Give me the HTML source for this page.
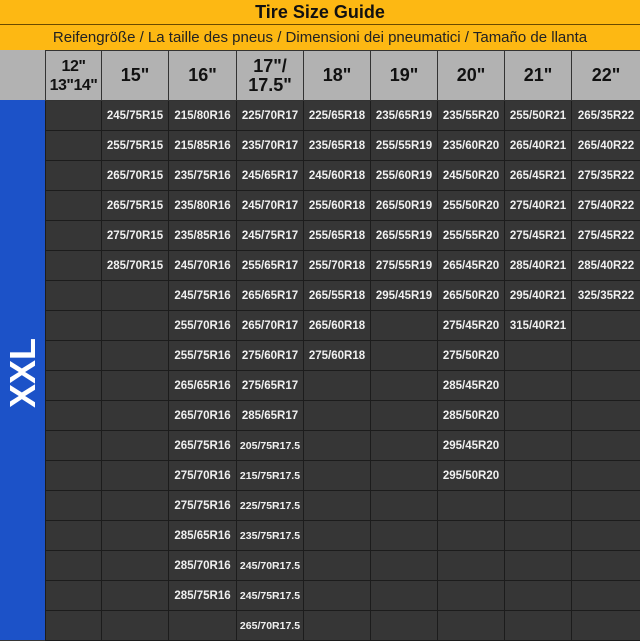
<!DOCTYPE html>
<html><head><meta charset="utf-8"><style>
*{margin:0;padding:0;box-sizing:border-box}
body{width:640px;height:640px;overflow:hidden;background:#363636;font-family:"Liberation Sans",sans-serif;position:relative}
.t1{position:absolute;left:0;top:0;width:640px;height:25px;background:#fdb813;border-bottom:1px solid #6a4a00;text-align:center;font-weight:bold;font-size:18px;line-height:25px;color:#111}
.t2{position:absolute;left:0;top:25px;width:640px;height:25px;background:#fdb813;text-align:center;font-size:15px;line-height:25px;color:#222}
.blue{position:absolute;left:0;top:100px;width:45px;height:540px;background:#1c52c8}
.grayl{position:absolute;left:0;top:50px;width:45px;height:50px;background:#b2b2b2}
.xxl{position:absolute;left:-15px;top:355px;width:76px;height:36px;transform:rotate(-90deg);color:#fff;font-weight:bold;font-size:36px;line-height:36px;text-align:center}
table{position:absolute;left:45px;top:50px;width:595px;border-collapse:collapse;table-layout:fixed}
td{border:1px solid #1c1c1c;height:30px;text-align:center;color:#f0f0f0;font-weight:bold;font-size:11.5px;background:#363636;white-space:nowrap;overflow:hidden;padding:0}
th{border:1px solid #333;height:50px;background:#b2b2b2;color:#111;font-size:18px;line-height:19px;font-weight:bold;overflow:hidden;white-space:nowrap;padding:0}
th.f{font-size:16px;letter-spacing:-0.5px}
.s{font-size:10.5px}
</style></head><body>
<div class="t1">Tire Size Guide</div>
<div class="t2">Reifengröße / La taille des pneus / Dimensioni dei pneumatici / Tamaño de llanta</div>
<div class="grayl"></div>
<div class="blue"></div>
<div class="xxl">XXL</div>
<table>
<colgroup><col style="width:56px"><col style="width:67px"><col style="width:68px"><col style="width:67px"><col style="width:67px"><col style="width:67px"><col style="width:67px"><col style="width:67px"><col style="width:69px"></colgroup>
<tr><th class="f">12"<br>13"14"</th><th>15"</th><th>16"</th><th>17"/<br>17.5"</th><th>18"</th><th>19"</th><th>20"</th><th>21"</th><th>22"</th></tr>
<tr><td></td><td>245/75R15</td><td>215/80R16</td><td>225/70R17</td><td>225/65R18</td><td>235/65R19</td><td>235/55R20</td><td>255/50R21</td><td>265/35R22</td></tr>
<tr><td></td><td>255/75R15</td><td>215/85R16</td><td>235/70R17</td><td>235/65R18</td><td>255/55R19</td><td>235/60R20</td><td>265/40R21</td><td>265/40R22</td></tr>
<tr><td></td><td>265/70R15</td><td>235/75R16</td><td>245/65R17</td><td>245/60R18</td><td>255/60R19</td><td>245/50R20</td><td>265/45R21</td><td>275/35R22</td></tr>
<tr><td></td><td>265/75R15</td><td>235/80R16</td><td>245/70R17</td><td>255/60R18</td><td>265/50R19</td><td>255/50R20</td><td>275/40R21</td><td>275/40R22</td></tr>
<tr><td></td><td>275/70R15</td><td>235/85R16</td><td>245/75R17</td><td>255/65R18</td><td>265/55R19</td><td>255/55R20</td><td>275/45R21</td><td>275/45R22</td></tr>
<tr><td></td><td>285/70R15</td><td>245/70R16</td><td>255/65R17</td><td>255/70R18</td><td>275/55R19</td><td>265/45R20</td><td>285/40R21</td><td>285/40R22</td></tr>
<tr><td></td><td></td><td>245/75R16</td><td>265/65R17</td><td>265/55R18</td><td>295/45R19</td><td>265/50R20</td><td>295/40R21</td><td>325/35R22</td></tr>
<tr><td></td><td></td><td>255/70R16</td><td>265/70R17</td><td>265/60R18</td><td></td><td>275/45R20</td><td>315/40R21</td><td></td></tr>
<tr><td></td><td></td><td>255/75R16</td><td>275/60R17</td><td>275/60R18</td><td></td><td>275/50R20</td><td></td><td></td></tr>
<tr><td></td><td></td><td>265/65R16</td><td>275/65R17</td><td></td><td></td><td>285/45R20</td><td></td><td></td></tr>
<tr><td></td><td></td><td>265/70R16</td><td>285/65R17</td><td></td><td></td><td>285/50R20</td><td></td><td></td></tr>
<tr><td></td><td></td><td>265/75R16</td><td class="s">205/75R17.5</td><td></td><td></td><td>295/45R20</td><td></td><td></td></tr>
<tr><td></td><td></td><td>275/70R16</td><td class="s">215/75R17.5</td><td></td><td></td><td>295/50R20</td><td></td><td></td></tr>
<tr><td></td><td></td><td>275/75R16</td><td class="s">225/75R17.5</td><td></td><td></td><td></td><td></td><td></td></tr>
<tr><td></td><td></td><td>285/65R16</td><td class="s">235/75R17.5</td><td></td><td></td><td></td><td></td><td></td></tr>
<tr><td></td><td></td><td>285/70R16</td><td class="s">245/70R17.5</td><td></td><td></td><td></td><td></td><td></td></tr>
<tr><td></td><td></td><td>285/75R16</td><td class="s">245/75R17.5</td><td></td><td></td><td></td><td></td><td></td></tr>
<tr><td></td><td></td><td></td><td class="s">265/70R17.5</td><td></td><td></td><td></td><td></td><td></td></tr>
</table>
</body></html>
